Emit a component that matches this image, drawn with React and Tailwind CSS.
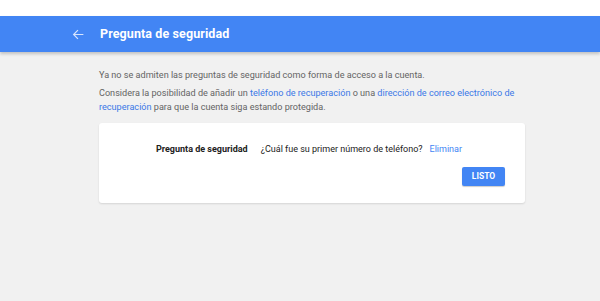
export default function App() {
  return (
    <div className="w-[600px] h-[301px] bg-[#f1f1f1] overflow-hidden" style={{ fontFamily: 'Roboto, "Liberation Sans", sans-serif' }}>
      <div className="h-4 bg-white" />
      <header className="h-9 bg-[#4285f4] flex items-center shadow-[0_2px_3px_rgba(0,0,0,0.2)] relative">
        <svg className="ml-[72px] w-[13px] h-[13px]" viewBox="0 0 24 24" fill="none" stroke="#d6e4fd" strokeWidth="2.2">
          <path d="M21 12H4M11 4l-8 8 8 8" />
        </svg>
        <h1 className="ml-[15px] text-white text-[12.5px] font-bold tracking-[0.1px]">Pregunta de seguridad</h1>
      </header>
      <main className="pl-[99px] pr-[78px] pt-[17px] text-[9.1px] text-[#646464]">
        <p className="leading-[13px]">Ya no se admiten las preguntas de seguridad como forma de acceso a la cuenta.</p>
        <p className="mt-[5px] leading-[13.5px]">
          Considera la posibilidad de añadir un <a className="text-[#3b78e7]">teléfono de recuperación</a> o una <a className="text-[#3b78e7]">dirección de correo electrónico de recuperación</a> para que la cuenta siga estando protegida.
        </p>
        <div className="mt-[9px] mr-[-3px] bg-white rounded-[3px] shadow-[0_1px_2px_rgba(0,0,0,0.12)] h-[80px] pt-[20px] pr-[20px]">
          <div className="flex items-center text-[9px]">
            <span className="ml-[57px] font-bold text-[#212121]">Pregunta de seguridad</span>
            <span className="ml-[13px] text-[#212121]">¿Cuál fue su primer número de teléfono?</span>
            <a className="ml-[7px] text-[#4285f4]">Eliminar</a>
          </div>
          <div className="flex justify-end mt-[10px]">
            <button className="w-[43px] h-[19px] bg-[#4285f4] text-white text-[8.5px] font-bold rounded-[2px] shadow-[0_1px_1px_rgba(0,0,0,0.2)]">LISTO</button>
          </div>
        </div>
      </main>
    </div>
  )
}
